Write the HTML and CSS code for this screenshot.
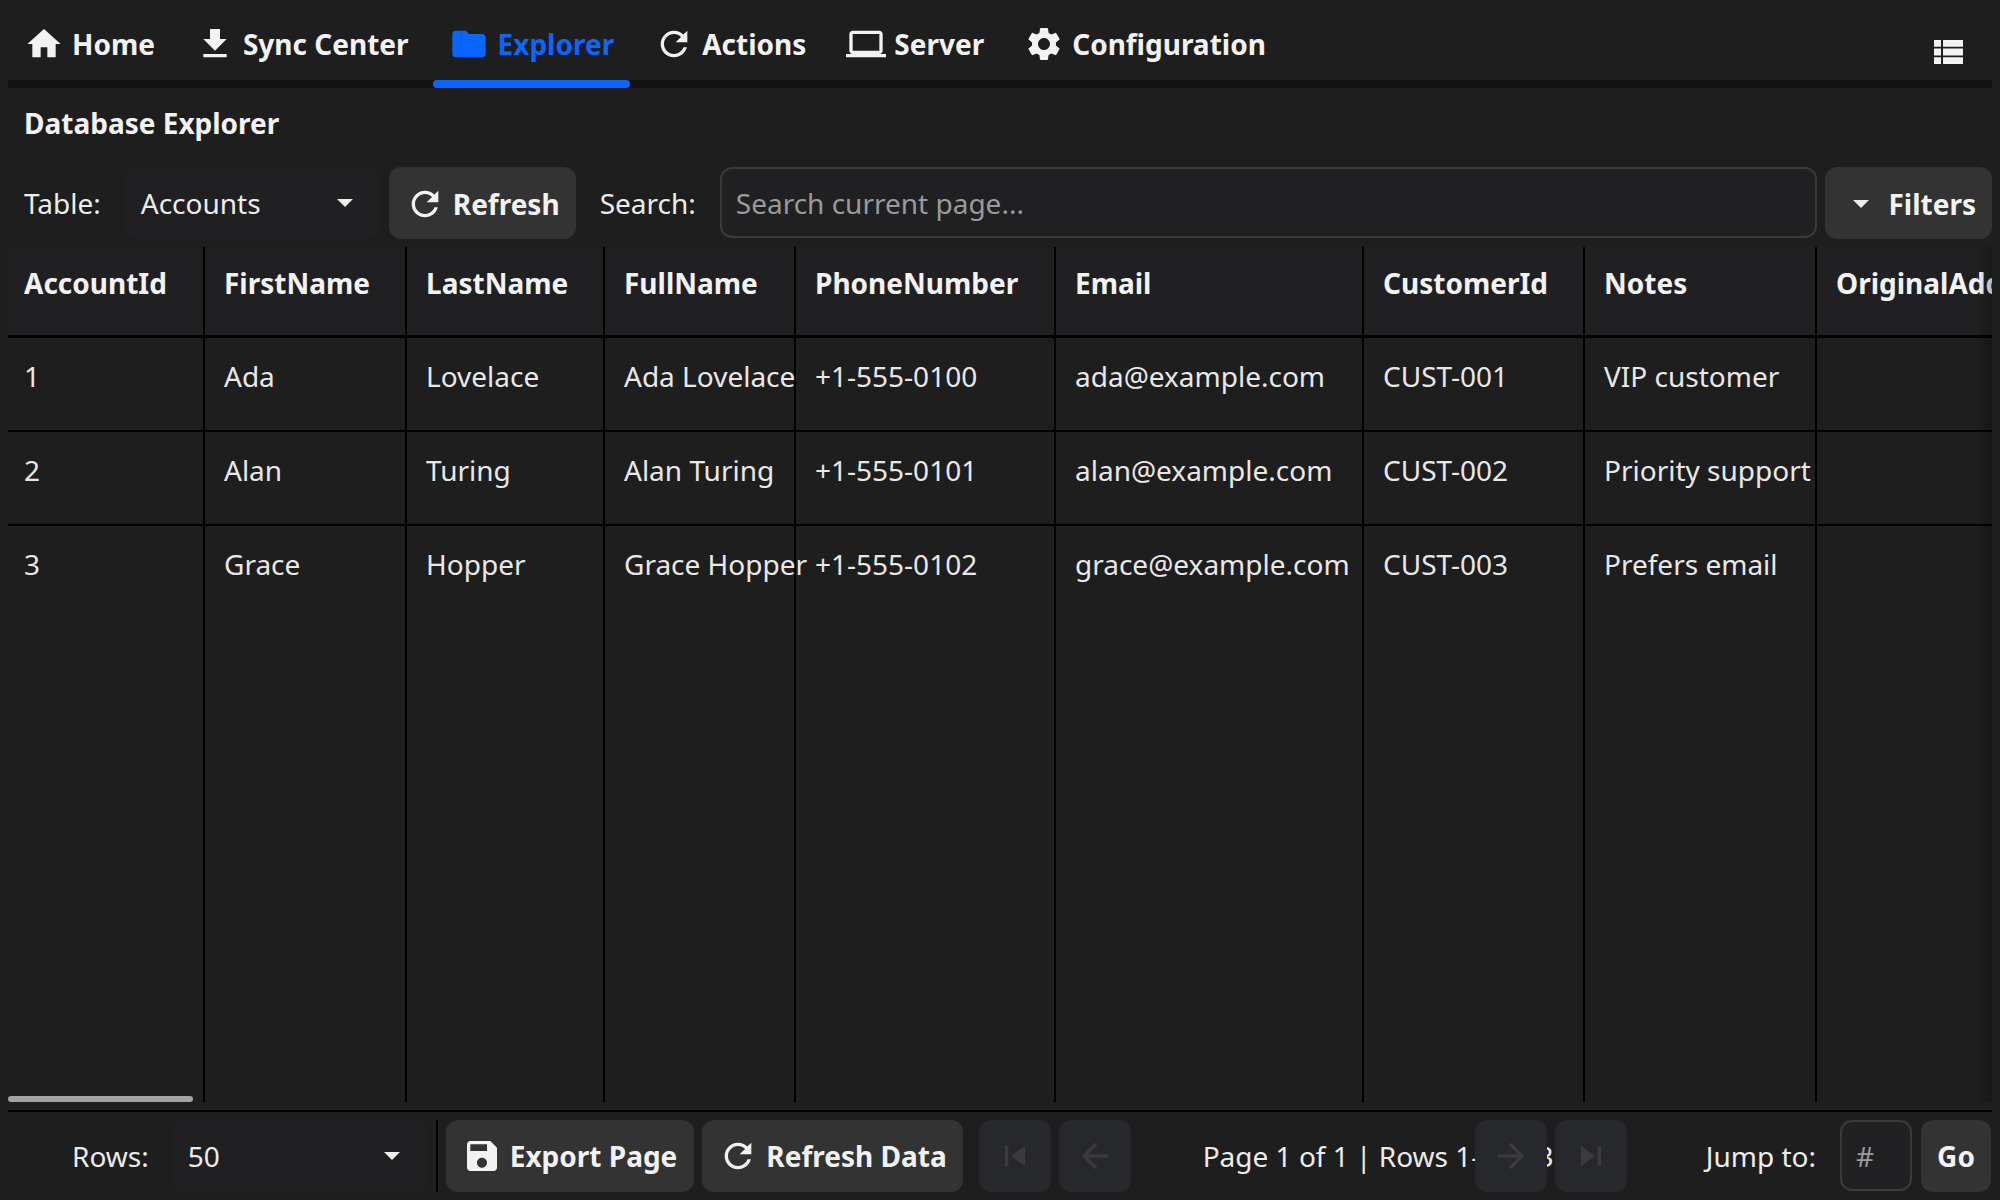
FILE: index.html
```html
<!DOCTYPE html>
<html>
  <head>
    <title>Database Explorer</title>
    <link rel="stylesheet" href="styles.css">
  </head>
  <body>
    <div class="app">
      <nav class="tabs">
        <a class="tab">
          <svg class="icon" viewBox="0 0 24 24"><path d="M10 20v-6h4v6h5v-8h3L12 3 2 12h3v8z"/></svg>
          Home
        </a>
        <a class="tab">
          <svg class="icon" viewBox="0 0 24 24"><path d="M19 9h-4V3H9v6H5l7 7 7-7zM5 18v2h14v-2H5z"/></svg>
          Sync Center
        </a>
        <a class="tab active">
          <svg class="icon" viewBox="0 0 24 24"><path d="M10 4H4c-1.1 0-1.99.9-1.99 2L2 18c0 1.1.9 2 2 2h16c1.1 0 2-.9 2-2V8c0-1.1-.9-2-2-2h-8l-2-2z"/></svg>
          Explorer
        </a>
        <a class="tab">
          <svg class="icon" viewBox="0 0 24 24"><path d="M17.65 6.35C16.2 4.9 14.21 4 12 4c-4.42 0-7.99 3.58-7.99 8s3.57 8 7.99 8c3.73 0 6.84-2.55 7.73-6h-2.08c-.82 2.33-3.04 4-5.65 4-3.31 0-6-2.69-6-6s2.69-6 6-6c1.66 0 3.14.69 4.22 1.78L13 11h7V4l-2.35 2.35z"/></svg>
          Actions
        </a>
        <a class="tab">
          <svg class="icon" viewBox="0 0 24 24"><path d="M20 18c1.1 0 1.99-.9 1.99-2L22 6c0-1.1-.9-2-2-2H4c-1.1 0-2 .9-2 2v10c0 1.1.9 2 2 2H0v2h24v-2h-4zM4 6h16v10H4V6z"/></svg>
          Server
        </a>
        <a class="tab">
          <svg class="icon" viewBox="0 0 24 24"><path d="M19.14 12.94c.04-.3.06-.61.06-.94 0-.32-.02-.64-.07-.94l2.03-1.58a.49.49 0 0 0 .12-.61l-1.92-3.32a.488.488 0 0 0-.59-.22l-2.39.96c-.5-.38-1.03-.7-1.62-.94l-.36-2.54a.484.484 0 0 0-.48-.41h-3.84c-.24 0-.43.17-.47.41l-.36 2.54c-.59.24-1.13.57-1.62.94l-2.39-.96c-.22-.08-.47 0-.59.22L2.74 8.87c-.12.21-.08.47.12.61l2.03 1.58c-.05.3-.09.63-.09.94s.02.64.07.94l-2.03 1.58a.49.49 0 0 0-.12.61l1.92 3.32c.12.22.37.29.59.22l2.39-.96c.5.38 1.03.7 1.62.94l.36 2.54c.05.24.24.41.48.41h3.84c.24 0 .44-.17.47-.41l.36-2.54c.59-.24 1.13-.56 1.62-.94l2.39.96c.22.08.47 0 .59-.22l1.92-3.32c.12-.22.07-.47-.12-.61l-2.01-1.58zM12 15.6c-1.98 0-3.6-1.62-3.6-3.6s1.62-3.6 3.6-3.6 3.6 1.62 3.6 3.6-1.62 3.6-3.6 3.6z"/></svg>
          Configuration
        </a>
        <button class="menu-btn">
          <svg class="menu-icon" viewBox="0 0 29 24"><path d="M0 0h7v6.800H0zM9 0h20v6.800H9zM0 8.600h7v6.800H0zM9 8.600h20v6.800H9zM0 17.200h7V24H0zM9 17.200h20V24H9z"/></svg>
        </button>
      </nav>

      <h1 class="page-title">Database Explorer</h1>

      <div class="toolbar">
        <span class="label">Table:</span>
        <button class="select select-table">
          Accounts
          <svg class="caret" viewBox="0 0 16 8"><path d="M0 0h16L8 8z"/></svg>
        </button>
        <button class="btn">
          <svg class="icon" viewBox="0 0 24 24"><path d="M17.65 6.35C16.2 4.9 14.21 4 12 4c-4.42 0-7.99 3.58-7.99 8s3.57 8 7.99 8c3.73 0 6.84-2.55 7.73-6h-2.08c-.82 2.33-3.04 4-5.65 4-3.31 0-6-2.69-6-6s2.69-6 6-6c1.66 0 3.14.69 4.22 1.78L13 11h7V4l-2.35 2.35z"/></svg>
          Refresh
        </button>
        <span class="label">Search:</span>
        <input class="input search-input" placeholder="Search current page...">
        <button class="btn filters-btn">
          <svg class="caret" viewBox="0 0 16 8"><path d="M0 0h16L8 8z"/></svg>
          Filters
        </button>
      </div>

      <div class="grid-wrap">
        <table class="grid">
          <colgroup>
            <col class="col-id">
            <col class="col-first">
            <col class="col-last">
            <col class="col-full">
            <col class="col-phone">
            <col class="col-email">
            <col class="col-customer">
            <col class="col-notes">
            <col class="col-address">
          </colgroup>
          <thead>
            <tr>
              <th>AccountId</th>
              <th>FirstName</th>
              <th>LastName</th>
              <th>FullName</th>
              <th>PhoneNumber</th>
              <th>Email</th>
              <th>CustomerId</th>
              <th>Notes</th>
              <th>OriginalAddress</th>
            </tr>
          </thead>
          <tbody>
            <tr class="row">
              <td>1</td>
              <td>Ada</td>
              <td>Lovelace</td>
              <td>Ada Lovelace</td>
              <td>+1-555-0100</td>
              <td>ada@example.com</td>
              <td>CUST-001</td>
              <td>VIP customer</td>
              <td></td>
            </tr>
            <tr class="row">
              <td>2</td>
              <td>Alan</td>
              <td>Turing</td>
              <td>Alan Turing</td>
              <td>+1-555-0101</td>
              <td>alan@example.com</td>
              <td>CUST-002</td>
              <td>Priority support</td>
              <td></td>
            </tr>
            <tr class="row last-row">
              <td>3</td>
              <td>Grace</td>
              <td>Hopper</td>
              <td>Grace Hopper</td>
              <td>+1-555-0102</td>
              <td>grace@example.com</td>
              <td>CUST-003</td>
              <td>Prefers email</td>
              <td></td>
            </tr>
          </tbody>
        </table>
        <div class="scroll-thumb"></div>
        <div class="scroll-fade"></div>
      </div>

      <div class="pager">
        <span class="label rows-label">Rows:</span>
        <button class="select select-rows">
          50
          <svg class="caret" viewBox="0 0 16 8"><path d="M0 0h16L8 8z"/></svg>
        </button>
        <div class="pager-sep"></div>
        <button class="btn export-btn">
          <svg class="icon" viewBox="0 0 24 24"><path d="M17 3H5c-1.11 0-2 .9-2 2v14c0 1.1.89 2 2 2h14c1.1 0 2-.9 2-2V7l-4-4zm-5 16c-1.66 0-3-1.34-3-3s1.34-3 3-3 3 1.34 3 3-1.34 3-3 3zm3-10H5V5h10v4z"/></svg>
          Export Page
        </button>
        <button class="btn">
          <svg class="icon" viewBox="0 0 24 24"><path d="M17.65 6.35C16.2 4.9 14.21 4 12 4c-4.42 0-7.99 3.58-7.99 8s3.57 8 7.99 8c3.73 0 6.84-2.55 7.73-6h-2.08c-.82 2.33-3.04 4-5.65 4-3.31 0-6-2.69-6-6s2.69-6 6-6c1.66 0 3.14.69 4.22 1.78L13 11h7V4l-2.35 2.35z"/></svg>
          Refresh Data
        </button>
        <button class="page-btn first-btn" disabled>
          <svg class="icon" viewBox="0 0 24 24"><path d="M6 6h2v12H6zm3.500 6l8.500 6V6z"/></svg>
        </button>
        <button class="page-btn" disabled>
          <svg class="icon" viewBox="0 0 24 24"><path d="M20 11H7.830l5.590-5.590L12 4l-8 8 8 8 1.410-1.410L7.830 13H20v-2z"/></svg>
        </button>
        <span class="page-info">Page 1 of 1 | Rows 1-3 of 3</span>
        <button class="page-btn" disabled>
          <svg class="icon" viewBox="0 0 24 24"><path d="M12 4l-1.410 1.410L16.170 11H4v2h12.170l-5.580 5.590L12 20l8-8z"/></svg>
        </button>
        <button class="page-btn" disabled>
          <svg class="icon" viewBox="0 0 24 24"><path d="M6 18l8.500-6L6 6v12zM16 6v12h2V6h-2z"/></svg>
        </button>
        <span class="label jump-label">Jump to:</span>
        <input class="input jump-input" placeholder="#">
        <button class="btn go-btn">Go</button>
      </div>
    </div>
  </body>
</html>
```

FILE: styles.css
```css
* {
  box-sizing: border-box;
}

body {
  margin: 0;
  background: #1e1e1e;
  color: #f0f0f0;
  font-family: "Noto Sans", sans-serif;
  font-size: 28px;
  line-height: 38px;
}

.app {
  height: 100vh;
  padding: 8px;
  display: flex;
  flex-direction: column;
  overflow: hidden;
}

.icon {
  width: 40px;
  height: 40px;
  flex-shrink: 0;
  fill: currentColor;
}

/* top nav */

.tabs {
  height: 80px;
  flex-shrink: 0;
  display: flex;
  gap: 8px;
  border-bottom: 8px solid #121212;
}

.tab {
  height: 72px;
  padding: 0 16px;
  display: flex;
  align-items: center;
  gap: 8px;
  font-weight: 700;
  color: #f2f2f2;
  position: relative;
}

.tab.active {
  gap: 9px;
  color: #0a66ff;
}

.tab.active::after {
  content: '';
  position: absolute;
  left: 0;
  right: 0;
  bottom: -8px;
  height: 8px;
  background: #0a66ff;
  border-radius: 4px;
}

.menu-btn {
  margin-left: auto;
  margin-right: 29px;
  padding: 0;
  background: none;
  border: none;
  display: flex;
  align-items: center;
}

.menu-icon {
  width: 29px;
  height: 24px;
  margin-top: 16px;
  fill: #f2f2f2;
}

.page-title {
  height: 79px;
  margin: 0;
  padding: 16px 16px 0;
  font-size: 28px;
  line-height: 38px;
  font-weight: 700;
  color: #f2f2f2;
  flex-shrink: 0;
}

/* toolbar + pager share these */

.toolbar,
.pager {
  height: 72px;
  flex-shrink: 0;
  display: flex;
  align-items: stretch;
  gap: 8px;
}

.label {
  padding: 0 16px;
  display: flex;
  align-items: center;
  color: #ececec;
  white-space: nowrap;
}

.select {
  padding: 0 16px;
  display: flex;
  align-items: center;
  justify-content: space-between;
  background: #202023;
  border: none;
  border-radius: 12px;
  color: #ececec;
  font: inherit;
}

.select-table {
  width: 255px;
  margin-right: 1px;
}

.select-table .caret {
  margin-right: 11px;
}

.select-rows {
  width: 256px;
}

.caret {
  width: 16px;
  height: 8px;
  margin-right: 12px;
  fill: #ececec;
  flex-shrink: 0;
}

.btn {
  padding: 0 16px;
  display: flex;
  align-items: center;
  gap: 8px;
  background: #333333;
  border: none;
  border-radius: 12px;
  color: #f2f2f2;
  font: inherit;
  font-weight: 700;
  white-space: nowrap;
}

.toolbar .btn {
  padding-top: 2px;
}

.input {
  height: 71px;
  padding: 0 14px;
  background: #202022;
  border: 2px solid #3a3a3a;
  border-radius: 12px;
  color: #ececec;
  font: inherit;
  outline: none;
}

.input::placeholder {
  color: #9a9a9a;
  opacity: 1;
}

.search-input {
  flex: 1;
  min-width: 0;
}

.filters-btn {
  gap: 19px;
}

.filters-btn .caret {
  margin: 0 0 0 12px;
}

/* data grid */

.grid-wrap {
  flex: 1;
  min-height: 0;
  margin-top: 8px;
  margin-bottom: 8px;
  position: relative;
  overflow: hidden;
}

.grid {
  width: 2309px;
  height: 100%;
  table-layout: fixed;
  border-collapse: separate;
  border-spacing: 0;
}

.col-id { width: 197px; }
.col-first { width: 202px; }
.col-last { width: 198px; }
.col-full { width: 191px; }
.col-phone { width: 260px; }
.col-email { width: 308px; }
.col-customer { width: 221px; }
.col-notes { width: 232px; }
.col-address { width: 500px; }

.grid th,
.grid td {
  padding: 17px 16px 0;
  text-align: left;
  vertical-align: top;
  white-space: nowrap;
  border-right: 2px solid #000;
}

.grid th {
  height: 91px;
  background: #202022;
  font-weight: 700;
  color: #f2f2f2;
  border-bottom: 3px solid #000;
}

.grid td {
  padding-top: 19px;
  font-weight: 400;
  color: #e8e8e8;
}

.grid th + th,
.grid td + td {
  padding-left: 19px;
}

.row td {
  height: 94px;
  border-bottom: 2px solid #000;
}

.last-row td {
  height: auto;
  border-bottom: none;
}

.scroll-thumb {
  position: absolute;
  left: 0;
  bottom: 0;
  width: 185px;
  height: 6px;
  background: #a3a3a3;
  border-radius: 3px;
}

.scroll-fade {
  position: absolute;
  top: 0;
  right: 0;
  bottom: 0;
  width: 14px;
  background: linear-gradient(90deg, rgba(0, 0, 0, 0), rgba(0, 0, 0, 0.25));
}

/* bottom pager */

.pager {
  height: 82px;
  padding: 8px 1px 0 48px;
  border-top: 2px solid #000;
}

.rows-label {
  padding-right: 15px;
}

.pager-sep {
  width: 2px;
  background: #000;
}

.export-btn {
  padding-right: 17px;
}

.page-btn {
  width: 72px;
  padding: 0;
  display: flex;
  align-items: center;
  justify-content: center;
  background: #27282c;
  border: none;
  border-radius: 12px;
  color: #3b3b3d;
}

.first-btn {
  margin-left: 8px;
}

.page-info {
  width: 328px;
  padding-left: 64px;
  display: flex;
  align-items: center;
  white-space: nowrap;
  color: #ececec;
}

.jump-label {
  margin-left: auto;
}

.jump-input {
  width: 72px;
  margin-right: 1px;
}

.go-btn {
  width: 70px;
  padding: 0;
  justify-content: center;
}
```
